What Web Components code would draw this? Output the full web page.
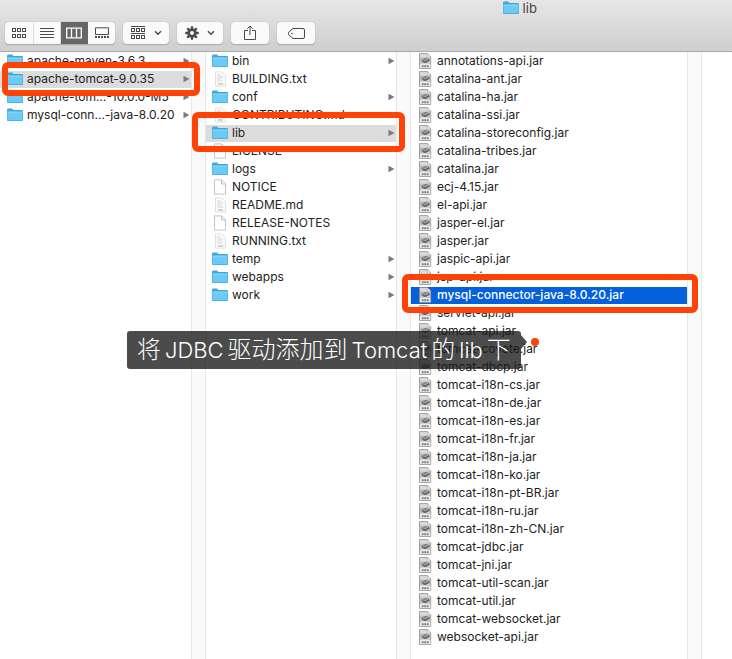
<!DOCTYPE html>
<html lang="zh-CN">
<head>
<meta charset="utf-8">
<title>lib</title>
<style>
html, body { margin: 0; height: 100%; }
body { font-family: Inter, "Noto Sans CJK SC", sans-serif; font-size: 12px; color: #222; background: #fff; overflow: hidden; }
</style>
</head>
<body>
<finder-window></finder-window>

<template id="t-window">
  <style>
    :host { display: flex; flex-direction: column; min-height: 100vh; position: relative; overflow: hidden; }
    main { flex: 1; display: grid; grid-template-columns: 206fr 205fr 291fr 30fr; }
    finder-column:first-child { --row-start: 7px; }
    caption-tag span { font-size: 22px; margin: 0 4px; }
  </style>
  <finder-toolbar><finder-icon name="folder"></finder-icon><span>lib</span></finder-toolbar>
  <main>
    <finder-column label="software" mark="-8px -9px -8px 2px"></finder-column>
    <finder-column label="apache-tomcat-9.0.35" mark="-12px -9px -10px -14px"></finder-column>
    <finder-column label="lib" mark="-12px -11px -9px -9px" active></finder-column>
    <div></div>
  </main>
  <caption-tag>将<span>JDBC</span>驱动添加到<span>Tomcat</span>的<span>lib</span>下</caption-tag>
</template>

<template id="t-toolbar">
  <style>
    :host { display: block; height: 51px; border-bottom: 1px solid #aaa; background: linear-gradient(#e6e6e6, #cfcfcf); color: #444; }
    h1 { margin: 0; height: 16px; padding: 0 0 6px 42%; display: flex; justify-content: center; align-items: center; gap: 4px; font-size: 13px; font-weight: 400; }
    nav { display: flex; gap: 8px; padding-left: 5px; }
    .group { display: flex; height: 22px; border-radius: 4px; background: #fafafa; box-shadow: 0 0 1px #999, 0 1px 1px #aaa; overflow: hidden; }
    button { border: 0; padding: 0; margin: 0; background: none; color: #4a4a4a; display: flex; align-items: center; justify-content: center; gap: 8px; width: 38px; }
    .views button { width: 29px; border-right: 1px solid #ddd; box-sizing: border-box; }
    .views button + button { width: 27px; }
    .views button:last-child { border: 0; }
    .views button[aria-pressed=true] { background: #666; color: #fff; border-color: #666; }
    .wide { width: 46px; }
  </style>
  <h1><slot></slot></h1>
  <nav aria-label="Toolbar">
    <div class="group views">
      <button aria-label="Icons"><finder-icon name="grid"></finder-icon></button>
      <button aria-label="List"><finder-icon name="list"></finder-icon></button>
      <button aria-label="Columns" aria-pressed="true"><finder-icon name="columns"></finder-icon></button>
      <button aria-label="Gallery"><finder-icon name="gallery"></finder-icon></button>
    </div>
    <div class="group"><button class="wide" aria-label="Group by"><finder-icon name="groups"></finder-icon><finder-icon name="chevron"></finder-icon></button></div>
    <div class="group"><button class="wide" aria-label="Actions"><finder-icon name="gear"></finder-icon><finder-icon name="chevron"></finder-icon></button></div>
    <div class="group"><button aria-label="Share"><finder-icon name="share"></finder-icon></button></div>
    <div class="group"><button aria-label="Tags"><finder-icon name="tag"></finder-icon></button></div>
  </nav>
</template>

<template id="t-column">
  <style>
    :host { display: grid; grid-template-columns: 1fr 15px; min-width: 0; }
    .gutter { background: #fafafa; border: solid #e7e7e7; border-width: 0 1px; box-sizing: border-box; }
    ul { list-style: none; margin: 0; padding: 0; min-width: 0; }
    li { position: relative; }
  </style>
  <ul></ul><div class="gutter"></div>
</template>

<template id="t-row">
  <style>
    :host { display: block; }
    button { font: inherit; color: inherit; border: 0; border-top: 1px solid transparent; background: none; background-clip: padding-box; padding: 0 1px 1px var(--row-start, 6px); margin: 0; width: 100%; height: 18px; box-sizing: border-box; display: flex; align-items: center; gap: 4px; text-align: left; line-height: 16px; white-space: nowrap; }
    span { flex: 1; }
    :host([selected]) button { background-color: #dcdcdc; }
    :host([selected=active]) button { background-color: #0560dc; color: #fff; font-weight: 500; }
    .arrow { color: #7b7b7b; }
  </style>
  <button><finder-icon></finder-icon><span><slot></slot></span></button>
</template>

<template id="t-mark">
  <style>
    :host { display: block; position: absolute; inset: var(--mark-inset); border: 6px solid #ff4206; border-radius: 6px; box-sizing: border-box; z-index: 2; pointer-events: none; }
  </style>
</template>

<template id="t-caption">
  <style>
    :host { display: block; position: absolute; left: 127px; top: 331px; z-index: 3; height: 38px; line-height: 38px; padding: 0 10px; border-radius: 3px; background: rgba(24, 24, 24, .78); color: #fff; font-size: 24px; font-weight: 300; white-space: nowrap; }
    i { position: absolute; left: 100%; top: 4px; border: solid transparent; border-width: 7px 0 7px 6px; border-left-color: rgba(24, 24, 24, .78); }
    b { position: absolute; left: calc(100% + 10px); top: 7px; width: 8px; height: 8px; border-radius: 50%; background: #ff4206; }
  </style>
  <slot></slot><i></i><b></b>
</template>

<script>
const squares = (ys) => ys.map(y => [1, 6, 11].map(x => `<rect x="${x - .5}" y="${y}" width="3" height="3"/>`).join('')).join('');
const line = 'fill="none" stroke="currentColor"';
const teeth = [0, 45, 90, 135, 180, 225, 270, 315].map(a => `<path d="M6 .2h2l.4 3H5.600z" transform="rotate(${a} 7 7)"/>`).join('');
const ICONS = {
  grid: [15, 12, `<g ${line}>${squares([1.5, 7.5])}</g>`],
  list: [14, 12, `<path ${line} d="M0 1.500h14M0 4.500h14M0 7.500h14M0 10.500h14"/>`],
  columns: [16, 12, `<path ${line} stroke-width="1.300" d="M.7 1.200h14.600v9.600H.7zM5.500 1v10M10.500 1v10"/>`],
  gallery: [14, 12, `<path ${line} d="M.5.800h13v6.700H.5z"/><path fill="currentColor" d="M0 9h2v2H0zm3 0h2v2H3zm3 0h2v2H6zm3 0h2v2H9zm3 0h2v2h-2z"/>`],
  groups: [15, 14, `<g ${line}>${squares([2.5, 9.5])}<path d="M0 .5h14M0 7.500h14"/></g>`],
  chevron: [8, 6, `<path ${line} stroke-width="1.400" d="M1 1.200l3 3 3-3"/>`],
  gear: [14, 14, `<g fill="currentColor">${teeth}</g><circle cx="7" cy="7" r="3.300" ${line} stroke-width="2.600"/>`],
  share: [12, 16, `<path ${line} d="M4 5.500H.5v9h11v-9H8M6 10V1M3.300 3.700L6 1l2.700 2.700"/>`],
  tag: [17, 11, `<path ${line} d="M5 .5h10q1.500 0 1.500 1.500v7q0 1.500-1.500 1.500H5L.8 7Q0 5.500.8 4z"/><circle cx="4" cy="5.500" r=".8" fill="currentColor"/>`],
  folder: [16, 14, `<path fill="#3fa9d6" d="M0 2Q0 .5 1.200.5H5L6.600 2H15q1 0 1 1v9q0 1-1 1H1q-1 0-1-1z"/><path fill="#6bcbf4" d="M.5 4h15v8.300H.5z"/><path fill="#8fdcfa" d="M.5 3.500h15v1H.5z"/>`],
  file: [16, 16, `<path fill="#fff" stroke="#b5b5b5" stroke-width=".8" d="M2.500.9h7.200l3.800 3.800v10.400h-11z"/><path fill="#f2f2f2" stroke="#b5b5b5" stroke-width=".8" d="M9.500 1v4h4"/>`],
  text: [16, 16, `<path fill="#fbfbfb" stroke="#dadada" stroke-width=".8" d="M3.500.9h6.200l3.800 3.800v10.400h-10z"/><path stroke="#cfcfcf" stroke-width=".8" d="M5 4h4M5 6h6M5 8h5M5 10h6"/><path stroke="#aaa" d="M6 13h5"/>`],
  jar: [16, 16, `<path fill="#dcdcdc" stroke="#8c8c8c" stroke-width=".8" d="M2.500.6h8l3.200 3.200v11.600H2.500z"/><path fill="#fff" stroke="#999" stroke-width=".6" d="M10.300.7v3.300h3.300"/><path fill="#bdbdbd" d="M3 4.500h10.300V11H3z"/><path fill="#666" d="M4.500 6.800q3.500-2.600 7-.8 1.500.2 1.200 1.400-.4 1-1.600 1-1 1.700-3.300 1.600-3-.2-3.300-3.200z"/><path fill="none" stroke="#e8e8e8" stroke-width=".7" d="M5.500 6.800q2.500 1 5.300-.2M3.500 10q4 1.300 9-.4"/><path fill="#eee" d="M3 11.200h10.300v3.800H3z"/><path stroke="#777" stroke-width="2" stroke-dasharray="1.800 .7" d="M4.800 13.200h6.800"/>`],
  arrow: [7, 8, `<path fill="currentColor" d="M.5.700L6.500 4l-6 3.300z"/>`]
};

function define(name, templateId, setup) {
  customElements.define(name, class extends HTMLElement {
    connectedCallback() {
      if (this.shadowRoot) return;
      this.attachShadow({ mode: 'open' }).append(document.getElementById(templateId).content.cloneNode(true));
      if (setup) setup(this, this.shadowRoot);
    }
  });
}

customElements.define('finder-icon', class extends HTMLElement {
  connectedCallback() {
    const [w, h, art] = ICONS[this.getAttribute('name')] || ICONS.file;
    const root = this.shadowRoot || this.attachShadow({ mode: 'open' });
    root.innerHTML = `<style>:host{display:block;flex:none}svg{display:block}</style><svg width="${w}" height="${h}" viewBox="0 0 ${w} ${h}" aria-hidden="true">${art}</svg>`;
  }
});

const FILES = {
  'software': ['apache-maven-3.6.3/', '*apache-tomcat-9.0.35/', 'apache-tom…-10.0.0-M5/', 'mysql-conn…-java-8.0.20/'],
  'apache-tomcat-9.0.35': ['bin/', 'BUILDING.txt', 'conf/', 'CONTRIBUTING.md', '*lib/', 'LICENSE', 'logs/', 'NOTICE', 'README.md', 'RELEASE-NOTES', 'RUNNING.txt', 'temp/', 'webapps/', 'work/'],
  'lib': ['annotations-api', 'catalina-ant', 'catalina-ha', 'catalina-ssi', 'catalina-storeconfig', 'catalina-tribes', 'catalina', 'ecj-4.15', 'el-api', 'jasper-el', 'jasper', 'jaspic-api', 'jsp-api', '*mysql-connector-java-8.0.20', 'servlet-api', 'tomcat-api', 'tomcat-coyote', 'tomcat-dbcp', 'tomcat-i18n-cs', 'tomcat-i18n-de', 'tomcat-i18n-es', 'tomcat-i18n-fr', 'tomcat-i18n-ja', 'tomcat-i18n-ko', 'tomcat-i18n-pt-BR', 'tomcat-i18n-ru', 'tomcat-i18n-zh-CN', 'tomcat-jdbc', 'tomcat-jni', 'tomcat-util-scan', 'tomcat-util', 'tomcat-websocket', 'websocket-api'].map(n => n + '.jar')
};

define('mark-frame', 't-mark');
define('caption-tag', 't-caption');
define('finder-row', 't-row', (host, root) => {
  const kind = host.getAttribute('kind');
  const icon = root.querySelector('finder-icon');
  icon.setAttribute('name', kind);
  icon.connectedCallback();
  if (kind === 'folder') {
    const arrow = document.createElement('finder-icon');
    arrow.setAttribute('name', 'arrow');
    arrow.className = 'arrow';
    root.querySelector('button').append(arrow);
  }
});
define('finder-column', 't-column', (host, root) => {
  const list = root.querySelector('ul');
  list.setAttribute('aria-label', host.getAttribute('label'));
  for (const entry of FILES[host.getAttribute('label')]) {
    const chosen = entry.startsWith('*');
    const name = entry.replace(/^\*|\/$/g, '');
    const li = document.createElement('li');
    const row = document.createElement('finder-row');
    row.textContent = name;
    row.setAttribute('kind', entry.endsWith('/') ? 'folder' : /\.jar$/.test(name) ? 'jar' : /\.(txt|md)$/.test(name) ? 'text' : 'file');
    li.append(row);
    if (chosen) {
      row.setAttribute('selected', host.hasAttribute('active') ? 'active' : '');
      const frame = document.createElement('mark-frame');
      frame.style.setProperty('--mark-inset', host.getAttribute('mark'));
      li.append(frame);
    }
    list.append(li);
  }
});
define('finder-toolbar', 't-toolbar');
define('finder-window', 't-window');
</script>
</body>
</html>
